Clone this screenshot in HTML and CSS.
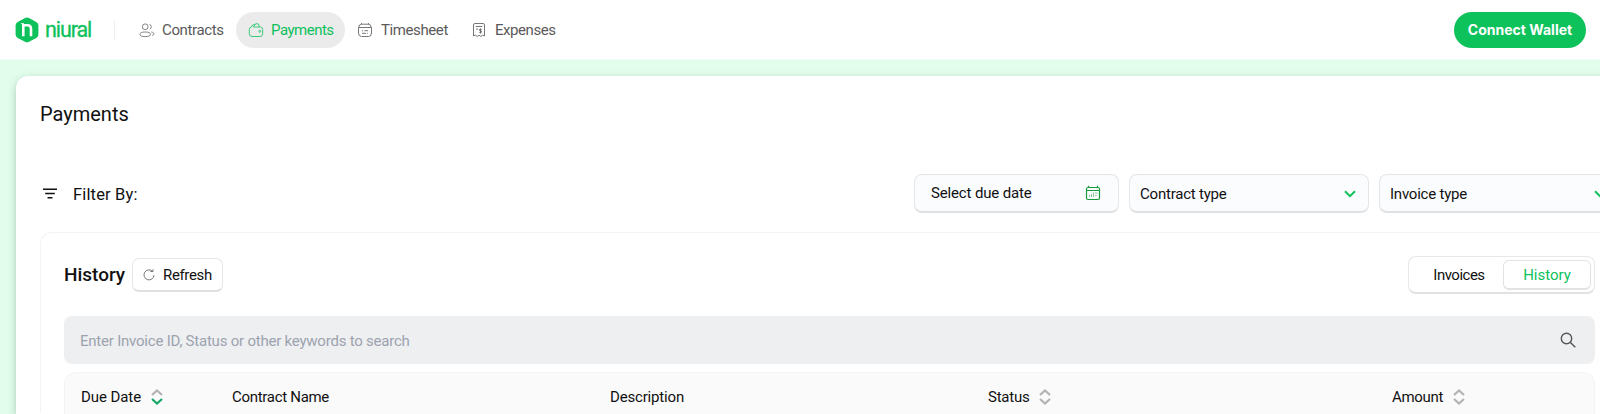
FILE: index.html
```html
<!DOCTYPE html>
<html lang="en">
<head>
<meta charset="utf-8">
<title>Payments</title>
<link rel="stylesheet" href="styles.css">
</head>
<body>
<header class="topbar">
  <div class="brand">
    <svg class="brand-mark" viewBox="0 0 24 26" width="24" height="26"><path d="M10 1.100Q12 .1 14 1.100L21.300 4.900Q23.400 6 23.400 8.200V17.600Q23.400 19.800 21.300 20.900L14 24.700Q12 25.700 10 24.700L2.700 20.900Q.6 19.800 .6 17.600V8.200Q.6 6 2.700 4.900Z" fill="#0dc15b"/><path d="M8.300 19.300V8.300H12.500Q16 8.300 16 12V19.300" fill="none" stroke="#fff" stroke-width="2.600"/><path d="M6 6.700H9" stroke="#fff" stroke-width="1"/></svg>
    <span class="brand-name">niural</span>
  </div>
  <nav class="nav">
    <a class="nav-item"><svg viewBox="0 0 16 16" width="16" height="16" fill="none" stroke="#777" stroke-width=".9"><circle cx="6.200" cy="4.800" r="2.900"/><ellipse cx="6.200" cy="12.300" rx="5.200" ry="2.300"/><path d="M10.500 2.400a2.500 2.500 0 0 1 .3 4.700M12.300 10c3.200.5 3.700 2.600.8 3.400"/></svg><span class="t-contracts">Contracts</span></a>
    <a class="nav-item active"><svg viewBox="0 0 16 16" width="16" height="16" fill="none" stroke="#3ccb7a" stroke-width="1"><path d="M3.500 5Q1.300 5.200 1.300 7.500v4.300q0 2.700 2.700 2.700h8q2.700 0 2.700-2.700V7.500q0-2.400-2.200-2.500H5.500M3.500 5q0-1.900 2-2.200L9 1.600q2-.5 2.400 3.400M5.300 5 7.300 2.300"/><circle cx="11.800" cy="9.300" r="1"/></svg><span class="t-payments">Payments</span></a>
    <a class="nav-item"><svg viewBox="0 0 16 16" width="16" height="16" fill="none" stroke="#777" stroke-width="1"><path d="M1.800 5.500Q1.800 2.200 4.500 2.200h7Q14.200 2.200 14.200 5.500M1.500 5.500h13V11q0 3.500-3 3.500h-7q-3 0-3-3.500ZM4.500 1v1.500M11.500 1v1.500M5 8.700h1M7.500 8.700H11M5 11.300h4M10.200 11.300h.8"/></svg><span class="t-timesheet">Timesheet</span></a>
    <a class="nav-item"><svg viewBox="0 0 16 16" width="16" height="16" fill="none" stroke="#777" stroke-width="1"><path d="M2.500 14V3Q2.500 1.500 4 1.500h8Q13.500 1.500 13.500 3v11l-1.800-1-1.800 1.500-1.900-1.300-1.900 1.300L4.300 13ZM4.700 4.500h6.600M5 7h2"/><path d="M10.700 7.500Q8.300 6.500 8.300 7.800q0 .9 1.200 1 1.300.2 1.200 1.200-.3 1.300-2.500.3M9.500 6.500v5" stroke="#555" stroke-width=".8"/></svg><span class="t-expenses">Expenses</span></a>
  </nav>
  <button class="wallet">Connect Wallet</button>
</header>
<main class="page">
  <section class="card">
    <h1 class="title">Payments</h1>
    <div class="filters">
      <svg class="filter-icon" viewBox="0 0 14 12" width="14" height="12" stroke="#111" stroke-width="1.400"><path d="M0 1.300H14M2.200 5.500H11.800M4.500 9.700H9.500"/></svg>
      <span class="filter-label">Filter By:</span>
      <div class="field date"><span class="t-date">Select due date</span><svg viewBox="0 0 16 16" width="16" height="16" fill="none" stroke="#189a3c"><path d="M1.500 5V4Q1.500 2.500 3 2.500h10q1.500 0 1.500 1.500v9q0 1.500-1.500 1.500H3Q1.500 14.500 1.500 13ZM1.500 5.500h13M3.500 .7v2M12.500 .7v2" stroke-width="1.200"/><path d="M4.500 10v2M6.500 9v3M8.500 7.500v4.500M10 8h2.500M10 10.500h1.500" stroke-width=".8" opacity=".65"/></svg></div>
      <div class="field"><span class="t-ctype">Contract type</span><svg viewBox="0 0 12 8" width="12" height="8" fill="none" stroke="#0dc15b" stroke-width="2"><path d="M1 1.300 6 6.200 11 1.300"/></svg></div>
      <div class="field"><span class="t-itype">Invoice type</span><svg viewBox="0 0 12 8" width="12" height="8" fill="none" stroke="#0dc15b" stroke-width="2"><path d="M1 1.300 6 6.200 11 1.300"/></svg></div>
    </div>
    <div class="panel">
      <div class="panel-head">
        <h2 class="panel-title">History</h2>
        <button class="refresh"><svg viewBox="0 0 12 12" width="12" height="12" fill="none" stroke="#666" stroke-width=".9"><path d="M9.500 2.300A5 5 0 1 0 11 6.300M7.500 2.500H10V.3"/></svg><span class="t-refresh">Refresh</span></button>
        <div class="toggle"><span class="seg invoices">Invoices</span><span class="seg selected">History</span></div>
      </div>
      <div class="search"><span class="placeholder">Enter Invoice ID, Status or other keywords to search</span><svg viewBox="0 0 16 16" width="16" height="16" fill="none" stroke="#555" stroke-width="1.400"><circle cx="6.500" cy="6.500" r="5.200"/><path d="M10.200 10.200 15.300 15.300"/></svg></div>
      <div class="table-head">
        <div class="col"><span class="t-due">Due Date</span><svg viewBox="0 0 12 16" width="12" height="16" fill="none" stroke-width="2.200"><path d="M1 6 6 1.500 11 6" stroke="#b3b3b3"/><path d="M1 10 6 14.500 11 10" stroke="#16a765"/></svg></div>
        <div class="col"><span class="t-name">Contract Name</span></div>
        <div class="col"><span class="t-desc">Description</span></div>
        <div class="col"><span class="t-status">Status</span><svg viewBox="0 0 12 16" width="12" height="16" fill="none" stroke="#b3b3b3" stroke-width="2.200"><path d="M1 6 6 1.500 11 6M1 10 6 14.500 11 10"/></svg></div>
        <div class="col"><span class="t-amount">Amount</span><svg viewBox="0 0 12 16" width="12" height="16" fill="none" stroke="#b3b3b3" stroke-width="2.200"><path d="M1 6 6 1.500 11 6M1 10 6 14.500 11 10"/></svg></div>
      </div>
    </div>
  </section>
</main>
</body>
</html>
```
FILE: styles.css
```css
* { box-sizing: border-box; }
html { overflow: hidden; }
body { display: flex; flex-direction: column; margin: 0; height: 414px; overflow: hidden; background: #e2fdec; color: #111; font: 15px/20px Roboto, "Liberation Sans", sans-serif; white-space: nowrap; }
svg { display: block; flex: none; }
button { font: inherit; color: inherit; margin: 0; }
.topbar { display: flex; flex: none; align-items: center; height: 60px; padding: 0 14px 0 15px; background: #fff; border-bottom: 1px solid #f3fef7; }
.brand { display: flex; align-items: center; width: 100px; height: 20px; border-right: 1px solid #eee; }
.brand-name { margin: 0 0 0 6px; width: 46px; font: 400 21.5px/24px Roboto, sans-serif; letter-spacing: -1.1px; color: #0dc15b; -webkit-text-stroke: .3px #0dc15b; }
.nav { display: flex; margin-left: 12px; }
.nav-item { display: flex; align-items: center; gap: 7px; height: 36px; padding: 0 12px; border-radius: 18px; color: #5a5a5a; }
.nav-item:nth-child(1) { width: 109px; }
.nav-item:nth-child(2) { width: 109px; }
.nav-item:nth-child(3) { width: 114px; }
.nav-item:nth-child(n+3) { gap: 8px; }
.nav-item.active { background: #ebebeb; color: #0dc15b; }
.t-contracts { letter-spacing: -.38px; }
.t-payments { letter-spacing: -.5px; }
.t-timesheet { letter-spacing: -.4px; }
.t-expenses { letter-spacing: -.45px; }
.wallet { margin-left: auto; width: 132px; height: 36px; padding: 0; border: 0; border-radius: 18px; background: #0dc15b; color: #fff; font: 700 14px/20px Inter, sans-serif; }
.page { flex: 1; min-height: 0; padding: 16px 0 0 16px; }
.card { width: 1627px; height: 338px; padding: 25px 24px 0; background: #fff; border-radius: 12px 0 0 0; box-shadow: 0 3px 8px rgba(0, 50, 25, .25); }
.title { margin: 0; font: 400 20px/26px Roboto, sans-serif; }
.filters { display: flex; align-items: center; height: 39px; margin-top: 47px; }
.filter-icon { margin-left: 3px; }
.filter-label { margin-left: 16px; padding-top: 2px; font-size: 16.5px; letter-spacing: .15px; }
.field { display: flex; align-items: center; justify-content: space-between; width: 240px; height: 39px; margin-left: 10px; padding: 1px 12px 0 10px; border: 1px solid #e4e6e9; border-bottom: 2px solid #dfe1e3; border-radius: 8px; background: #fbfcfe; }
.date { width: 205px; margin-left: auto; padding: 0 17px 0 16px; }
.t-date { letter-spacing: -.15px; }
.t-ctype, .t-itype { padding-top: 1px; letter-spacing: -.22px; }
.panel { height: 181px; margin-top: 19px; padding: 25px 23px 0; border: 1px solid #f4f4f4; border-bottom: 0; border-radius: 12px 12px 0 0; }
.panel-head { display: flex; align-items: center; height: 34px; }
.panel-title { width: 61px; margin: 0; font: 500 19px/24px Roboto, sans-serif; }
.refresh { display: flex; align-items: center; gap: 8px; width: 91px; height: 34px; margin-left: 7px; padding: 1px 10px 0; border: 1px solid #e6e6e6; border-bottom: 2px solid #e0e0e0; border-radius: 7px; background: #fff; }
.t-refresh { letter-spacing: -.35px; }
.toggle { display: flex; align-items: center; width: 187px; height: 38px; margin-left: auto; padding: 3px; border: 1px solid #e8e8e8; border-bottom: 2px solid #e2e2e2; border-radius: 8px; }
.seg { display: flex; align-items: center; justify-content: center; height: 30px; }
.invoices { width: 92px; padding-left: 3px; letter-spacing: -.5px; }
.selected { width: 89px; padding-top: 2px; border: 1px solid #e2e2e2; border-bottom-width: 2px; border-radius: 6px; color: #0dc15b; }
.search { display: flex; align-items: center; justify-content: space-between; height: 48px; margin-top: 24px; padding: 0 19px 0 16px; border-radius: 8px; background: #eeeff1; color: #9ca3af; }
.placeholder { padding-top: 1px; letter-spacing: -.22px; }
.table-head { display: grid; grid-template-columns: 151px 378px 378px 404px 1fr; align-items: center; height: 50px; margin-top: 8px; padding: 0 0 2px 16px; border: 1px solid #f3f3f3; border-bottom: 0; border-radius: 12px 12px 0 0; background: #fafafa; }
.col { display: flex; align-items: center; gap: 10px; }
.t-due { letter-spacing: -.08px; }
.t-name { letter-spacing: -.3px; }
.t-desc { letter-spacing: -.17px; }
.t-status { letter-spacing: -.25px; }
.t-amount { letter-spacing: -.3px; }
```
